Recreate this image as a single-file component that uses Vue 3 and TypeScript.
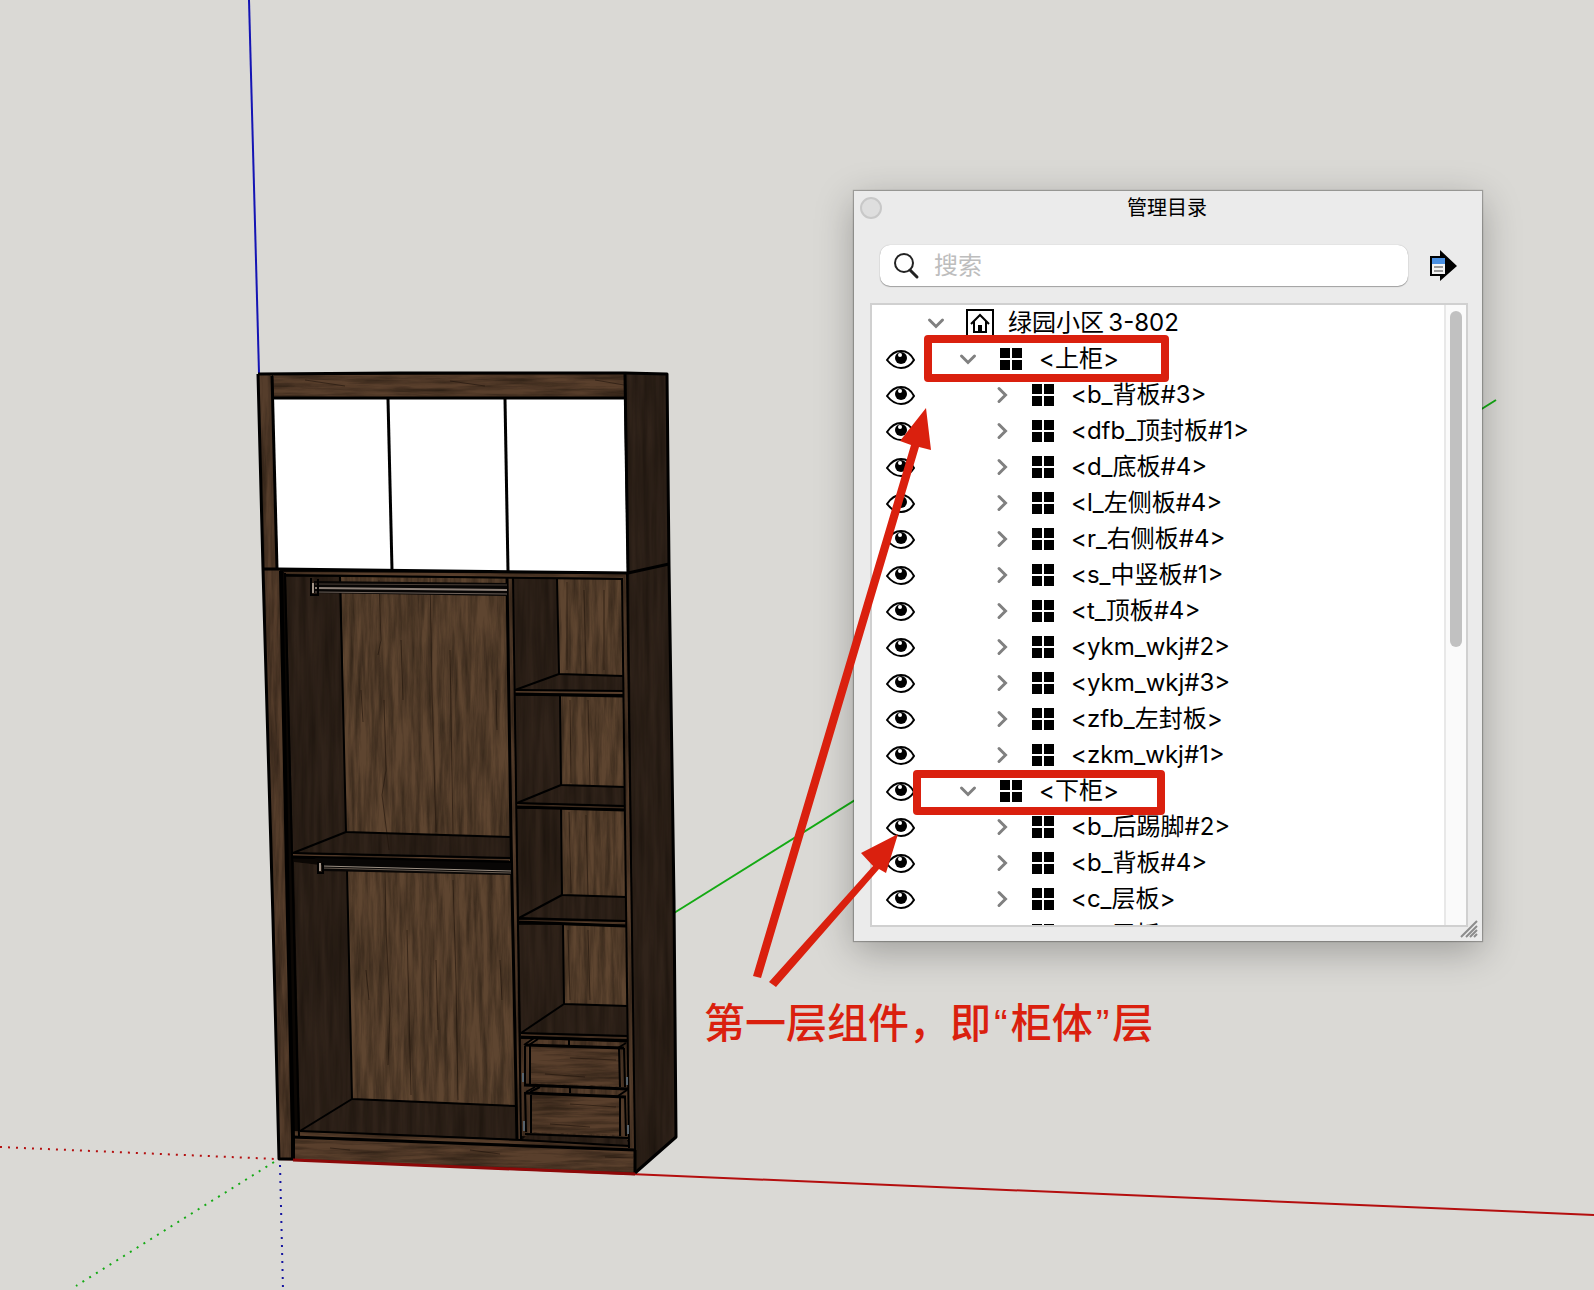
<script setup lang="ts">
import { ref } from 'vue'

interface TreeNode {
  level: number
  label: string
  open: boolean
}

const query = ref('')

const nodes: TreeNode[] = [
  { level: 0, label: '绿园小区\u20093-802', open: true },
  { level: 1, label: '<上柜>', open: true },
  { level: 2, label: '<b_背板#3>', open: false },
  { level: 2, label: '<dfb_顶封板#1>', open: false },
  { level: 2, label: '<d_底板#4>', open: false },
  { level: 2, label: '<l_左侧板#4>', open: false },
  { level: 2, label: '<r_右侧板#4>', open: false },
  { level: 2, label: '<s_中竖板#1>', open: false },
  { level: 2, label: '<t_顶板#4>', open: false },
  { level: 2, label: '<ykm_wkj#2>', open: false },
  { level: 2, label: '<ykm_wkj#3>', open: false },
  { level: 2, label: '<zfb_左封板>', open: false },
  { level: 2, label: '<zkm_wkj#1>', open: false },
  { level: 1, label: '<下柜>', open: true },
  { level: 2, label: '<b_后踢脚#2>', open: false },
  { level: 2, label: '<b_背板#4>', open: false },
  { level: 2, label: '<c_层板>', open: false },
  { level: 2, label: '<c_层板#1>', open: false },
]

// Faces of the wardrobe, grouped by how they catch the light
const lightFaces: string[] = [
  '341,577 507,578 511,837 346,832',
  '557,578 622,579 623,676 559,674',
  '560,696 624,697 625,787 561,785',
  '561,809 625,811 626,897 562,895',
  '563,925 627,927 627,1006 564,1004',
  '347,868 512,872 516,1106 352,1099',
]
const stripFaces: string[] = [
  '258,374 272,375 277,569 263,569',
  '263,569 280,569 293,1159 279,1159',
  '507,578 513,578 521,1140 517,1140',
  '622,575 627,575 635,1150 629,1150',
  '521,1039 628,1042 629,1140 521,1136',
]
const railFaces: string[] = [
  '273,375 624,374 624,397 274,397',
  '284,572 627,574 622,578 285,575',
  '293,854 511,859 511,861 293,857',
  '515,690 623,691 623,694 515,693',
  '517,804 625,807 625,809 517,806',
  '519,920 626,922 626,925 519,922',
  '521,1034 628,1037 628,1039 521,1036',
  '293,1131 629,1145 634,1150 293,1137',
  '294,1138 634,1150 634,1173 294,1159',
  '531,1046 619,1049 620,1086 531,1083',
  '531,1094 619,1097 621,1135 531,1132',
]
const darkFaces: string[] = [
  '626,374 667,374 669,565 628,572',
  '629,573 669,565 676,1137 635,1173',
  '286,577 340,577 346,832 293,853',
  '294,862 347,868 352,1099 300,1131',
  '513,578 557,578 559,674 515,690',
  '515,696 560,696 561,785 517,803',
  '517,809 561,809 562,895 519,918',
  '519,925 563,925 564,1004 521,1033',
  '346,832 511,837 511,858 293,853',
  '559,674 623,676 623,690 515,690',
  '561,785 625,787 625,806 517,803',
  '562,895 626,897 626,921 519,918',
  '564,1004 627,1006 628,1036 521,1033',
  '352,1099 516,1106 517,1139 300,1131',
  '529,1133 626,1137 629,1145 521,1141',
]
// Cracks in the veneer
const cracks: string[] = [
  'M379 580L381 640L378 655', 'M384 700L386 770L382 795L389 850', 'M361 690L363 722',
  'M430 576L432 690L436 832', 'M450 650L453 834', 'M401 640L403 700', 'M496 690L497 730',
  'M385 872L386 930L390 1010L388 1065', 'M407 930L411 1095', 'M453 880L456 980L458 1100',
  'M436 960L438 1030', 'M366 970L369 1000', 'M500 960L502 1000',
  'M567 582V670M584 590L586 674M604 590V670', 'M570 700L571 783M588 700L590 785',
  'M569 812L571 893M586 815L588 896', 'M568 930L570 1000M588 930L590 1000',
  'M305 380L345 386M450 381L485 386M595 380L624 385', 'M330 1148L350 1150M470 1150L500 1154M605 1157L633 1158',
  'M570 1058L616 1060M545 1074L585 1077M570 1104L616 1107M550 1124L590 1127',
]
const thinEdges: string[] = [
  '285,575 622,579', '340,577 346,832 511,837', '293,853 346,832',
  '347,868 352,1099 516,1106', '300,1131 352,1099',
  '293,853 511,858', '557,578 559,674 623,676', '515,690 559,674', '515,690 623,691',
  '560,696 561,785 625,787', '517,803 561,785', '517,803 625,806',
  '561,809 562,895 626,897', '519,918 562,895', '519,918 626,921',
  '563,925 564,1004 627,1006', '521,1033 564,1004', '521,1033 628,1036',
  '300,1131 521,1140 629,1146', '285,573 299,1136',
  '513,578 521,1140', '622,578 629,1148', '627,573 635,1150',
  '525,1046 525,1084', '530,1046 530,1084', '619,1048 620,1087', '624,1048 625,1087',
  '525,1092 526,1132', '531,1095 531,1133', '620,1096 620,1136', '625,1096 626,1136',
  '524,1045 534,1038', '529,1045 538,1039', '618,1048 626,1043',
  '526,1092 535,1087', '530,1092 540,1087', '618,1096 627,1090',
  '569,1040 569,1045', '570,1088 570,1093',
  '525,1134 628,1138',
]
const thickEdges: string[] = [
  '258,374 400,373 625,373 667,374 669,565 674,900 676,1137 635,1173',
  '258,374 263,569 273,920 279,1159 294,1159',
  '272,376 277,569', '273,398 624,398', '263,569 278,569 628,573 669,564',
  '625,374 628,573', '388,399 392,570', '505,399 508,571',
  '507,578 511,837 517,1140', '293,857 511,862', '515,694 623,696',
  '517,807 625,810', '519,922 626,926', '521,1037 628,1041',
  '293,1137 635,1150', '635,1150 635,1173',
  '525,1045 624,1048', '524,1085 628,1089', '526,1093 626,1097',
]
</script>

<template>
  <main class="viewport">
    <svg class="scene" viewBox="0 0 1594 1290" preserveAspectRatio="xMinYMin slice" role="img" aria-label="衣柜模型">
      <defs>
        <filter id="grain-v" x="0" y="0" width="100%" height="100%" color-interpolation-filters="sRGB">
          <feTurbulence type="fractalNoise" baseFrequency="0.18 0.014" numOctaves="5" seed="7" result="n" />
          <feColorMatrix in="n" type="matrix" values="0 0 0 0 0.06  0 0 0 0 0.04  0 0 0 0 0.02  0.9 0 0 0 -0.28" result="g" />
          <feComposite in="g" in2="SourceGraphic" operator="in" result="c" />
          <feMerge><feMergeNode in="SourceGraphic" /><feMergeNode in="c" /></feMerge>
        </filter>
        <filter id="grain-h" x="0" y="0" width="100%" height="100%" color-interpolation-filters="sRGB">
          <feTurbulence type="fractalNoise" baseFrequency="0.014 0.18" numOctaves="5" seed="11" result="n" />
          <feColorMatrix in="n" type="matrix" values="0 0 0 0 0.06  0 0 0 0 0.04  0 0 0 0 0.02  1.1 0 0 0 -0.38" result="g" />
          <feComposite in="g" in2="SourceGraphic" operator="in" result="c" />
          <feMerge><feMergeNode in="SourceGraphic" /><feMergeNode in="c" /></feMerge>
        </filter>
        <filter id="grain-d" x="0" y="0" width="100%" height="100%" color-interpolation-filters="sRGB">
          <feTurbulence type="fractalNoise" baseFrequency="0.14 0.01" numOctaves="3" seed="3" result="n" />
          <feColorMatrix in="n" type="matrix" values="0 0 0 0 0.06  0 0 0 0 0.04  0 0 0 0 0.02  0.8 0 0 0 -0.2" result="g" />
          <feComposite in="g" in2="SourceGraphic" operator="in" result="c" />
          <feMerge><feMergeNode in="SourceGraphic" /><feMergeNode in="c" /></feMerge>
        </filter>
      </defs>

      <g fill="none" stroke-width="2">
        <path d="M249 0L259 373" stroke="#1414b4" />
        <path d="M674 913L1496 400" stroke="#14aa14" />
        <path d="M280 1159L1594 1215" stroke="#b40f0f" />
        <path d="M0 1147L276 1159" stroke="#b40f0f" stroke-dasharray="2 6" />
        <path d="M274 1162L76 1286" stroke="#14aa14" stroke-dasharray="2 6" />
        <path d="M280 1165L283 1290" stroke="#1414a0" stroke-dasharray="2 6" />
      </g>

      <polygon points="258,374 667,374 669,565 676,1137 635,1173 279,1159" fill="#0b0704" />
      <g fill="#5e4530" filter="url(#grain-v)">
        <polygon v-for="p in lightFaces" :key="p" :points="p" />
      </g>
      <g fill="#553d2b" filter="url(#grain-v)">
        <polygon v-for="p in stripFaces" :key="p" :points="p" />
      </g>
      <g fill="#593f2c" filter="url(#grain-h)">
        <polygon v-for="p in railFaces" :key="p" :points="p" />
      </g>
      <g fill="#30231a" filter="url(#grain-d)">
        <polygon v-for="p in darkFaces" :key="p" :points="p" />
      </g>
      <g fill="none" stroke="#1c110a" stroke-opacity="0.55">
        <path v-for="d in cracks" :key="d" :d="d" />
      </g>
      <polygon points="273,398 624,398 627,572 278,569" fill="#fff" />

      <g fill="none" stroke="#000" stroke-width="2" stroke-linejoin="round">
        <polyline v-for="p in thinEdges" :key="p" :points="p" />
      </g>
      <g fill="none" stroke="#000" stroke-width="3" stroke-linejoin="round">
        <polyline v-for="p in thickEdges" :key="p" :points="p" />
        <path d="M281 571L288 920L293 1138V1159" stroke-width="4" />
      </g>

      <!-- Hanging rails -->
      <g fill="none">
        <path d="M314 581L507 583V596L314 593Z" fill="#080605" />
        <path d="M315 584L507 585" stroke="#4b4038" />
        <path d="M315 588L507 590" stroke="#8c8078" stroke-width="2" />
        <path d="M315 592L507 594" stroke="#6e625a" />
        <path d="M311 578V595H318V579" stroke="#000" stroke-width="2" />
        <path d="M313 583V593" stroke="#a19488" stroke-width="2" />
        <path d="M314 858L511 863V875L322 871V862Z" fill="#080605" />
        <path d="M322 866L511 871" stroke="#9b8f83" />
        <path d="M322 868L511 873" stroke="#675b50" />
        <path d="M318 862V873H323V863" stroke="#000" stroke-width="2" />
        <path d="M320 863V871" stroke="#a19488" stroke-width="2" />
      </g>
      <!-- Drawer slides -->
      <path d="M523 1073V1082M524 1121V1131M627 1077V1085M628 1125V1134" stroke="#59636b" stroke-width="2" />
      <path d="M293 1160L635 1174" stroke="#8c0808" stroke-width="3" />
    </svg>

    <section class="panel" aria-label="管理目录">
      <header class="titlebar">
        <button class="close" type="button" aria-label="关闭"></button>
        <h1>管理目录</h1>
      </header>

      <div class="toolbar">
        <label class="search">
          <svg width="28" height="28" viewBox="0 0 28 28" fill="none" stroke="#222" aria-hidden="true">
            <circle cx="12" cy="11" r="9" stroke-width="2" />
            <path d="M18 18L25 25" stroke-width="3" stroke-linecap="round" />
          </svg>
          <input v-model="query" type="text" placeholder="搜索" aria-label="搜索" />
        </label>
        <button class="details" type="button" aria-label="详细信息">
          <svg width="28" height="32" viewBox="0 0 28 32" aria-hidden="true">
            <path d="M0 6H10V0L27 16L10 31V26H0Z" fill="#000" />
            <path d="M2 8H15V24H2Z" fill="#f4f4f4" />
            <path d="M2 8H15V14H2Z" fill="#4a90e2" />
            <path d="M4 17H13M4 21H13" stroke="#999" stroke-width="2" />
          </svg>
        </button>
      </div>

      <div class="tree">
        <ul>
          <li v-for="(node, i) in nodes" :key="i" :class="`level-${node.level}`">
            <span class="eye-cell">
              <button v-if="node.level > 0" type="button" aria-label="切换可见性">
                <svg width="30" height="22" viewBox="0 0 30 22" aria-hidden="true">
                  <path d="M1 12C5 6 10 3 15 3S25 6 28 12C25 17 20 20 15 20S5 17 1 12Z" fill="#fff" stroke="#000" stroke-width="2" stroke-linejoin="round" />
                  <circle cx="15" cy="10" r="6" fill="#000" />
                  <circle cx="14" cy="7" r="2" fill="#fff" />
                </svg>
              </button>
            </span>
            <button class="toggle" type="button" :aria-expanded="node.open" aria-label="展开或折叠">
              <svg width="18" height="18" viewBox="0 0 18 18" fill="none" stroke="#808080" stroke-width="3" stroke-linecap="round" aria-hidden="true">
                <path v-if="node.open" d="M2.500 6L9 12.500L15.500 6" />
                <path v-else d="M7 2.500L13.500 9L7 15.500" />
              </svg>
            </button>
            <svg v-if="node.level === 0" class="kind" width="28" height="28" viewBox="0 0 28 28" fill="none" stroke="#000" stroke-width="2" aria-hidden="true">
              <path d="M1 1H27V27H1Z" />
              <path d="M5 15L14 6L23 15M8 12V23H20V12" />
              <path d="M12 16H16V23H12Z" fill="#000" stroke="none" />
            </svg>
            <svg v-else class="kind" width="22" height="22" viewBox="0 0 22 22" aria-hidden="true">
              <path d="M0 0H10V10H0ZM12 0H22V10H12ZM0 12H10V22H0ZM12 12H22V22H12Z" fill="#000" />
            </svg>
            <span class="name">{{ node.label }}</span>
          </li>
        </ul>
        <div class="track"><div class="thumb"></div></div>
      </div>

      <svg class="grip" width="18" height="18" viewBox="0 0 18 18" stroke="#8c8c8c" stroke-width="2" aria-hidden="true">
        <path d="M1 17L17 1M6 17L17 6M10 17L17 10M14 17L17 14" />
      </svg>
    </section>

    <svg class="marks" viewBox="0 0 1594 1290" preserveAspectRatio="xMinYMin slice" aria-hidden="true">
      <g fill="none" stroke="#da200e" stroke-width="8" stroke-linejoin="round">
        <rect x="928" y="339" width="237" height="39" />
        <rect x="917" y="774" width="244" height="37" />
      </g>
      <g fill="#da200e">
        <path d="M753 976L911 445L900 441L926 408L931 450L919 447L761 978Z" />
        <path d="M769 982L873 866L861 853L898 834L886 873L879 869L776 987Z" />
      </g>
    </svg>
    <p class="note">第一层组件，即<span>“</span>柜体<span>”</span>层</p>
  </main>
</template>

<style>
body {
  margin: 0;
  background: #dad9d5;
}
</style>

<style scoped>
.viewport {
  position: relative;
  min-height: 100vh;
  overflow: hidden;
  background: #dad9d5;
  color: #000;
  font-family: Inter, "Noto Sans CJK SC", sans-serif;
}
.scene,
.marks {
  position: absolute;
  inset: 0;
  width: 100%;
  height: 100%;
}
.marks {
  pointer-events: none;
}
button {
  display: block;
  padding: 0;
  border: 0;
  background: none;
}
svg {
  display: block;
}
.panel {
  position: absolute;
  left: 854px;
  top: 191px;
  display: flex;
  flex-direction: column;
  box-sizing: border-box;
  width: 628px;
  height: 750px;
  padding: 0 14px 14px 16px;
  background: #ebebeb;
  box-shadow: 0 0 1px 1px rgba(0, 0, 0, 0.25), 0 10px 36px rgba(0, 0, 0, 0.28);
}
.titlebar {
  position: relative;
  display: flex;
  align-items: center;
  justify-content: center;
  height: 34px;
  padding-right: 4px;
}
.titlebar h1 {
  margin: 0;
  font-size: 20px;
  font-weight: 400;
  line-height: 36px;
}
.close {
  position: absolute;
  left: -10px;
  top: 6px;
  box-sizing: border-box;
  width: 22px;
  height: 22px;
  border: 2px solid #c8c8c8;
  border-radius: 50%;
  background: #dedede;
}
.toolbar {
  display: flex;
  align-items: center;
  gap: 22px;
  margin: 20px 10px 17px;
}
.search {
  display: flex;
  flex: 1;
  align-items: center;
  gap: 14px;
  height: 41px;
  padding: 0 12px;
  border-radius: 10px;
  background: #fff;
  box-shadow: 0 0 1px rgba(0, 0, 0, 0.3), 0 1px 1px rgba(0, 0, 0, 0.3);
}
.search input {
  flex: 1;
  min-width: 0;
  padding: 0;
  border: 0;
  outline: 0;
  background: none;
  font: inherit;
  font-size: 24px;
}
.search input::placeholder {
  color: #bdbdbd;
}
.tree {
  display: flex;
  flex: 1;
  min-height: 0;
  border: 2px solid #d0d0d0;
  background: #fff;
}
ul {
  flex: 1;
  margin: 0;
  padding: 0;
  overflow: hidden;
  list-style: none;
}
li {
  display: flex;
  align-items: center;
  height: 36px;
  white-space: nowrap;
}
.eye-cell {
  width: 55px;
  box-sizing: border-box;
  padding-left: 14px;
}
.kind {
  flex: none;
}
.name {
  font-size: 24px;
  line-height: 36px;
}
.level-0 .toggle {
  margin-right: 21px;
}
.level-0 .name {
  margin-left: 14px;
}
.level-1 .toggle {
  margin: 0 23px 0 32px;
}
.level-2 .toggle {
  margin: 0 22px 0 65px;
}
.level-1 .name,
.level-2 .name {
  margin-left: 17px;
}
.track {
  box-sizing: border-box;
  width: 22px;
  padding: 6px 4px;
  border-left: 2px solid #e8e8e8;
  background: #fafafa;
}
.thumb {
  width: 12px;
  height: 336px;
  border-radius: 6px;
  background: #c1c1c1;
}
.grip {
  position: absolute;
  right: 4px;
  bottom: 3px;
}
.note {
  position: absolute;
  left: 704px;
  top: 993px;
  margin: 0;
  color: #da200e;
  font-size: 41px;
  font-weight: 500;
  line-height: 60px;
  white-space: nowrap;
}
.note span {
  padding: 0 3px;
  font-family: "Liberation Sans", sans-serif;
}
</style>
